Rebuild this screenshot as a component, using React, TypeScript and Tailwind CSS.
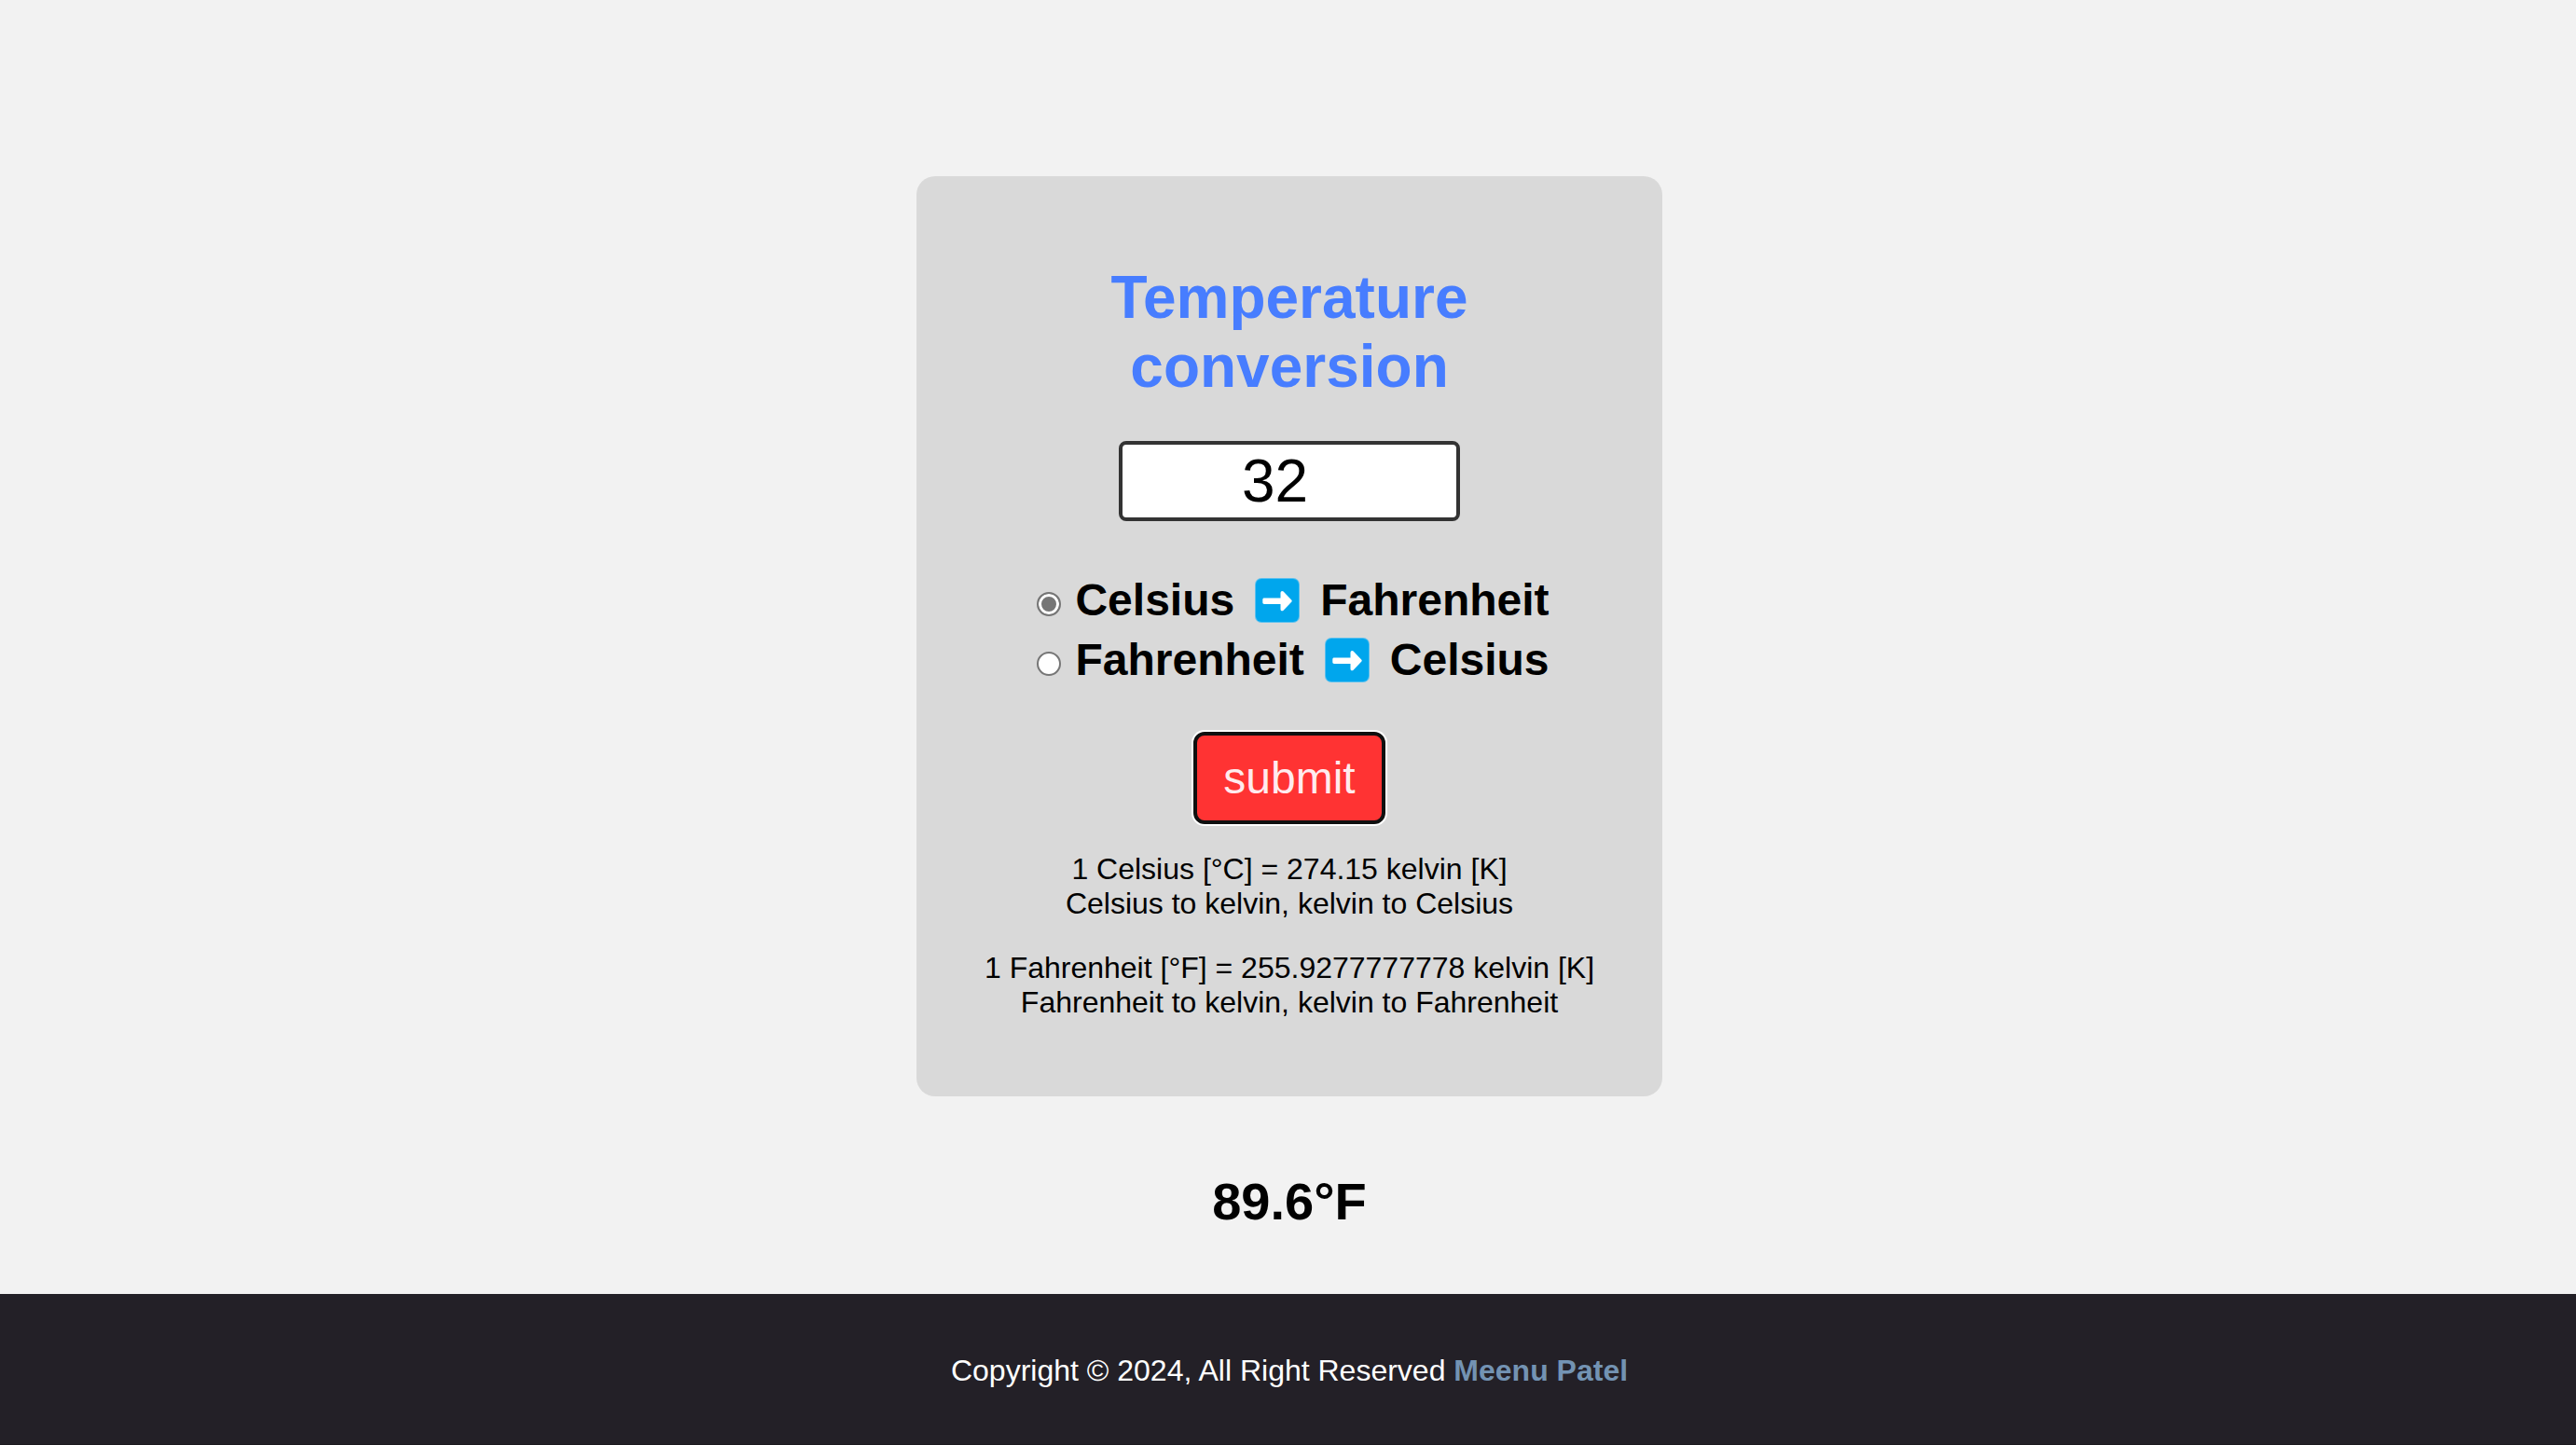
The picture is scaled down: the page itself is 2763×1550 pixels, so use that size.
import { useState } from 'react'
import type { FormEvent } from 'react'

type Direction = 'toFahrenheit' | 'toCelsius'

function ArrowIcon() {
  return (
    <svg viewBox="0 0 48 48" className="mx-[9px] size-12 shrink-0" role="img" aria-label="to">
      <rect width="48" height="48" rx="7" fill="#5cc0ee" />
      <rect x="1" y="1" width="46" height="46" rx="6" fill="#00a6ed" />
      <path
        d="M10 21.5h17.5v-5.6c0-1.8 1.9-2.6 3.1-1.3l8.8 9.1c.5.6.5 1.3 0 1.9l-8.8 9.1c-1.2 1.3-3.1.5-3.1-1.3v-5.4H10c-1 0-1.7-.7-1.7-1.7v-3.1c0-1 .7-1.7 1.7-1.7z"
        fill="#fff"
      />
    </svg>
  )
}

interface OptionProps {
  id: Direction
  from: string
  to: string
  checked: boolean
  onSelect: (id: Direction) => void
}

function Option({ id, from, to, checked, onSelect }: OptionProps) {
  return (
    <div className="flex h-16 items-center gap-[15px]">
      <input
        id={id}
        type="radio"
        name="direction"
        checked={checked}
        onChange={() => onSelect(id)}
        className="mt-2 size-[26px] shrink-0 appearance-none rounded-full border-2 border-[#767676] bg-white checked:bg-[#767676] checked:shadow-[inset_0_0_0_3px_white]"
      />
      <label htmlFor={id} className="flex items-center gap-[13px] text-5xl/[64px] font-bold">
        {from}
        <ArrowIcon />
        {to}
      </label>
    </div>
  )
}

export default function App() {
  const [value, setValue] = useState('32')
  const [direction, setDirection] = useState<Direction>('toFahrenheit')
  const [result, setResult] = useState('89.6°F')

  const convert = (event: FormEvent) => {
    event.preventDefault()
    const n = Number(value)
    setResult(
      direction === 'toFahrenheit'
        ? `${((n * 9) / 5 + 32).toFixed(1)}°F`
        : `${(((n - 32) * 5) / 9).toFixed(1)}°C`,
    )
  }

  return (
    <div className="flex min-h-screen flex-col bg-[#f2f2f2] font-['Liberation_Sans',Arial,sans-serif] text-black">
      <main className="flex grow flex-col items-center pt-[189px] pl-[3px]">
        <form
          onSubmit={convert}
          className="flex w-full max-w-[800px] flex-col items-center rounded-[20px] bg-[#d9d9d9] px-16 pt-[93px] pb-[82px] text-center"
        >
          <h1 className="text-[64px]/[74px] font-bold text-[#477dff]">
            Temperature
            <br />
            conversion
          </h1>
          <input
            type="number"
            aria-label="Temperature"
            value={value}
            onChange={(event) => setValue(event.target.value)}
            className="mt-[43px] h-[86px] w-[366px] rounded-lg border-4 border-[#333333] bg-white pr-4 text-center text-[64px]/[74px] outline-none"
          />
          <fieldset className="mt-[53px] ml-2" aria-label="Conversion direction">
            <Option
              id="toFahrenheit"
              from="Celsius"
              to="Fahrenheit"
              checked={direction === 'toFahrenheit'}
              onSelect={setDirection}
            />
            <Option
              id="toCelsius"
              from="Fahrenheit"
              to="Celsius"
              checked={direction === 'toCelsius'}
              onSelect={setDirection}
            />
          </fieldset>
          <button
            type="submit"
            className="mt-[45px] rounded-xl border-4 border-[#101010] bg-[#ff3333] px-7 py-[18px] text-5xl/[55px] text-[#ffebee] ring-2 ring-white"
          >
            submit
          </button>
          <p className="mt-[30px] text-[32px]/[37px]">
            1 Celsius [°C] = 274.15 kelvin [K]
            <br />
            Celsius to kelvin, kelvin to Celsius
          </p>
          <p className="mt-8 text-[32px]/[37px]">
            1 Fahrenheit [°F] = 255.9277777778 kelvin [K]
            <br />
            Fahrenheit to kelvin, kelvin to Fahrenheit
          </p>
        </form>
        <output className="mt-[81px] mb-[67px] text-[56px]/[64px] font-bold">{result}</output>
      </main>
      <footer className="border-b border-[#1c1a1f] bg-[#232027] pt-16 pb-[60px] pl-[3px] text-center text-[32px]/[37px] text-white">
        <p>
          Copyright © 2024, All Right Reserved{' '}
          <a href="#" className="font-bold text-[#7393b3]">
            Meenu Patel
          </a>
        </p>
      </footer>
    </div>
  )
}
